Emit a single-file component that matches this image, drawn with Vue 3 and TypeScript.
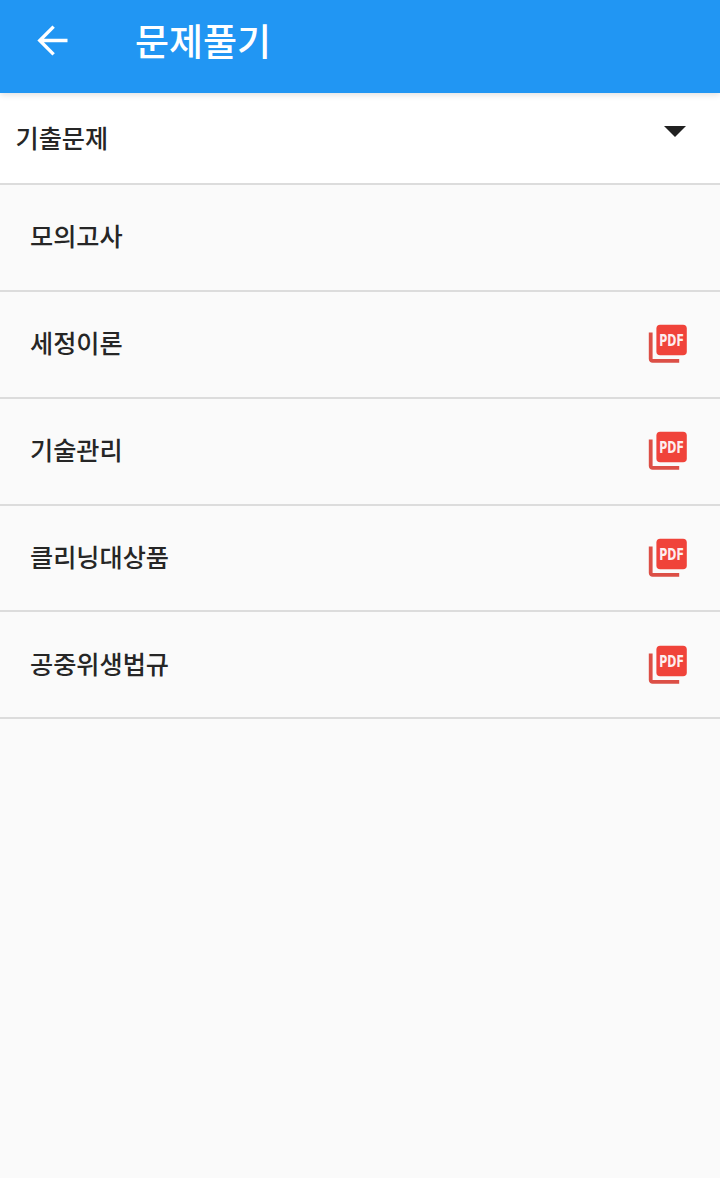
<script setup lang="ts">
const rows: { name: string; pdf: boolean }[] = [
  { name: '모의고사', pdf: false },
  { name: '세정이론', pdf: true },
  { name: '기술관리', pdf: true },
  { name: '클리닝대상품', pdf: true },
  { name: '공중위생법규', pdf: true },
]
</script>

<template>
  <div class="page">
    <header class="bar">
      <svg class="back" viewBox="0 0 24 24" width="45" height="45">
        <path fill="none" stroke="#fff" stroke-width="1.8" d="M20 12H5.5M12.6 4.6 5.2 12l7.4 7.4" />
      </svg>
      <h1 class="title">문제풀기</h1>
    </header>
    <div class="select">
      <span class="select-label">기출문제</span>
      <span class="caret"></span>
    </div>
    <ul class="list">
      <li v-for="row in rows" :key="row.name" class="row">
        <span class="row-name">{{ row.name }}</span>
        <svg v-if="row.pdf" class="pdf" viewBox="0 0 24 24" width="45.6" height="45.6">
          <path fill="#f0433a" d="M8 2h12a2 2 0 0 1 2 2v12a2 2 0 0 1-2 2H8a2 2 0 0 1-2-2V4a2 2 0 0 1 2-2z" />
          <path fill="#dc4f46" d="M4 6H2v14c0 1.1.9 2 2 2h14v-2H4V6z" />
          <text transform="translate(14 12.9) scale(.72 1)" text-anchor="middle" class="pdf-text">PDF</text>
        </svg>
      </li>
    </ul>
  </div>
</template>

<style>
html, body { margin: 0; background: #fafafa; }
</style>

<style scoped>
.page {
  width: 720px;
  height: 1178px;
  background: #fafafa;
  overflow: hidden;
  font-family: "Noto Sans CJK KR", "Noto Sans", sans-serif;
}
.bar {
  height: 93px;
  background: #2196f3;
  display: flex;
  align-items: center;
  padding-left: 30px;
  padding-bottom: 12px;
  box-sizing: border-box;
  box-shadow: 0 2px 6px rgba(0, 0, 0, 0.12);
  position: relative;
}
.back { flex: none; }
.title {
  margin: 0 0 0 60px;
  font-size: 37px;
  font-weight: 500;
  color: #fff;
  line-height: 1;
}
.select {
  height: 92px;
  background: #fff;
  border-bottom: 2px solid #dcdcdc;
  box-sizing: border-box;
  display: flex;
  justify-content: space-between;
  padding: 0 34px 0 15.5px;
}
.select-label {
  font-size: 25.2px;
  font-weight: 500;
  color: #262626;
  line-height: 88px;
}
.caret {
  width: 0;
  height: 0;
  margin-top: 33px;
  border-left: 11.5px solid transparent;
  border-right: 11.5px solid transparent;
  border-top: 11.5px solid #212121;
}
.list { list-style: none; margin: 0; padding: 0; }
.row {
  height: 106.85px;
  box-sizing: border-box;
  border-bottom: 2px solid #dcdcdc;
  display: flex;
  align-items: center;
  justify-content: space-between;
  padding: 0 29px 0 30px;
}
.row-name {
  font-size: 25.2px;
  font-weight: 500;
  color: #262626;
  line-height: 1;
  margin-top: -3px;
}
.pdf { flex: none; overflow: visible; }
.pdf-text {
  font-family: "DejaVu Sans", sans-serif;
  font-size: 8px;
  font-weight: 700;
  fill: #fdeeee;
}
</style>
